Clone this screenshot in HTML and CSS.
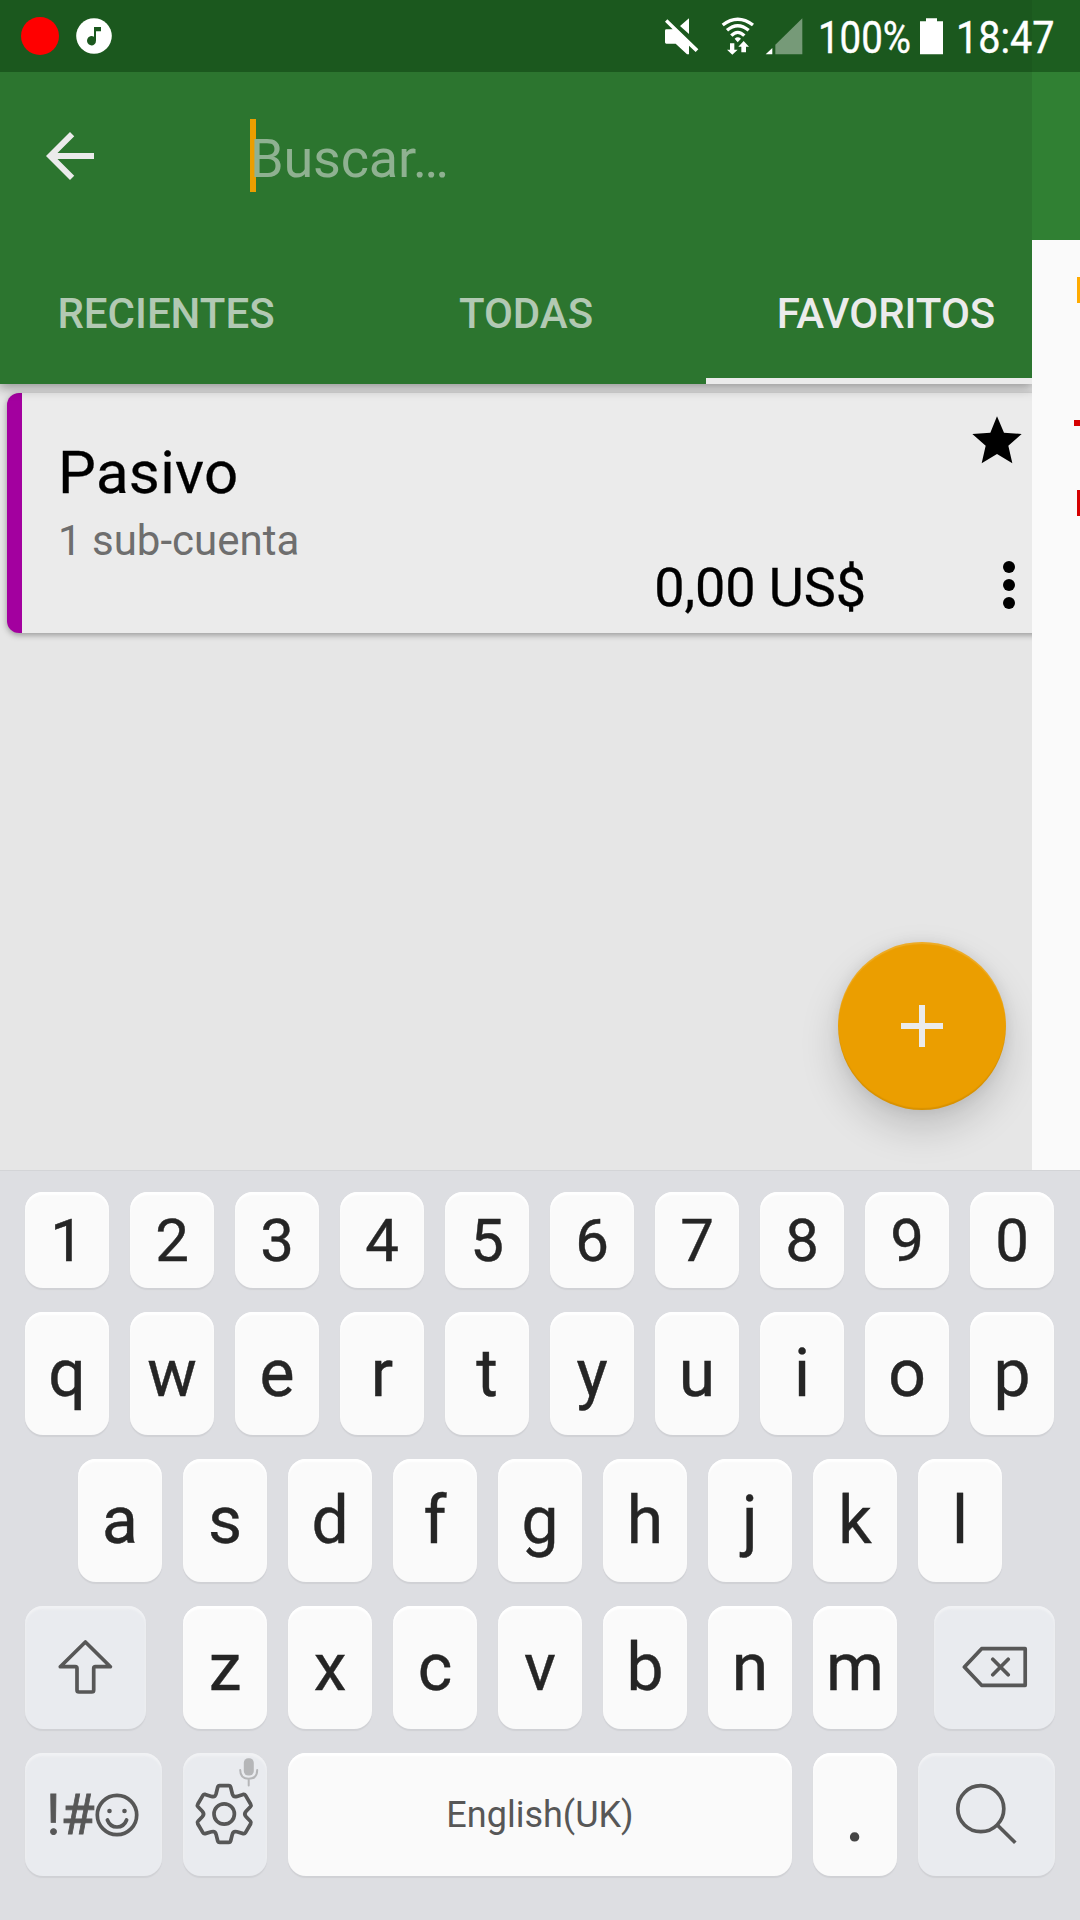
FILE: index.html
```html
<!DOCTYPE html>
<html lang="es">
<head>
<meta charset="utf-8">
<title>Cuentas</title>
<link rel="stylesheet" href="styles.css">
</head>
<body>
<div class="screen">
  <header class="status">
    <div class="status-left">
      <span class="record"></span>
      <svg class="music" width="36" height="36" viewBox="0 0 36 36"><circle cx="18" cy="18" r="17.8" fill="#fff"/><path class="note" d="M18 9h7v4.200h-5v9.300a4.500 4.700 0 1 1-2-3.700z"/></svg>
    </div>
    <div class="status-right">
      <svg class="mute" width="36" height="38" viewBox="72 50 108 114" fill="#fff"><path d="M147 54v47L120 77zM79 87h19L75 64l7-7 93 90-8 8-20-19v26h-6l-34-32H79q-4 0-4-4V91q0-4 4-4z"/></svg>
      <svg class="wifi" width="34" height="38" viewBox="242 50 102 114" fill="none" stroke="#fff" stroke-width="10"><path d="M247 74Q292 39 338 74M260 90Q292 62 325 90M273 106Q292 86 312 106"/><path stroke="none" fill="#fff" d="M283 115q9-8 19 0l-10 11zM269 129h13v19h10l-16 15-16-15h9zM303 156v-17h-9l16-17 16 17h-9v17z"/></svg>
      <svg class="signal" width="38" height="38" viewBox="374 50 114 114"><path fill="#769a78" d="M486 54v108h-81v-29z"/><path fill="#fff" d="M396 143v19h-20z"/></svg>
      <span class="status-text percent">100%</span>
      <svg class="battery" width="24" height="38" viewBox="840 50 72 114"><path fill="#fff" d="M858 54h33v9h18v99h-69V63h18z"/></svg>
      <span class="status-text clock">18:47</span>
    </div>
  </header>

  <main class="app">
    <section class="pane">
      <div class="toolbar">
        <div class="search-row">
          <svg class="back" width="72" height="72" viewBox="0 0 24 24" fill="#ebebeb"><path d="M20 11H7.830l5.590-5.590L12 4l-8 8 8 8 1.410-1.410L7.830 13H20v-2z"/></svg>
          <div class="search"><i class="caret"></i><span>Buscar…</span></div>
        </div>
        <nav class="tabs">
          <a class="tab">RECIENTES</a>
          <a class="tab">TODAS</a>
          <a class="tab active">FAVORITOS</a>
        </nav>
      </div>
      <article class="card">
        <div class="info">
          <h2>Pasivo</h2>
          <p>1 sub-cuenta</p>
        </div>
        <div class="amount">0,00 US$</div>
        <div class="actions">
          <svg class="star" width="50" height="48" viewBox="1116 498 150 144"><path d="M1191 499l21 49 53 4-40 35 12 53-46-28-46 28 12-53-40-35 54-4z"/></svg>
          <svg class="more" width="12" height="48" viewBox="0 0 12 48"><circle cx="6" cy="6" r="6"/><circle cx="6" cy="24" r="6"/><circle cx="6" cy="42" r="6"/></svg>
        </div>
      </article>
      <button class="fab"><svg width="42" height="42" viewBox="0 0 42 42"><path fill="#ebebeb" d="M18 0h6v18h18v6H24v18h-6V24H0v-6h18z"/></svg></button>
    </section>
    <aside class="peek">
      <div class="peek-bar"></div>
      <div class="peek-list">
        <span class="mark amber"></span>
        <span class="mark dash"></span>
        <span class="mark red"></span>
      </div>
    </aside>
  </main>

  <section class="keyboard">
    <div class="row full digits"><span class="key">1</span><span class="key">2</span><span class="key">3</span><span class="key">4</span><span class="key">5</span><span class="key">6</span><span class="key">7</span><span class="key">8</span><span class="key">9</span><span class="key">0</span></div>
    <div class="row full"><span class="key">q</span><span class="key">w</span><span class="key">e</span><span class="key">r</span><span class="key">t</span><span class="key">y</span><span class="key">u</span><span class="key">i</span><span class="key">o</span><span class="key">p</span></div>
    <div class="row"><span class="key">a</span><span class="key">s</span><span class="key">d</span><span class="key">f</span><span class="key">g</span><span class="key">h</span><span class="key">j</span><span class="key">k</span><span class="key">l</span></div>
    <div class="row">
      <span class="key fn shift"><svg width="121" height="123" viewBox="25 1606 121 123"><path d="M85.400 1642l25 24.700H95.500q-1.800 0-1.800 1.800V1690q0 2-2 2H79q-2 0-2-2v-21.500q0-1.800-1.800-1.800H60.300z"/></svg></span>
      <span class="key">z</span><span class="key">x</span><span class="key">c</span><span class="key">v</span><span class="key">b</span><span class="key">n</span><span class="key">m</span>
      <span class="key fn delete"><svg width="121" height="123" viewBox="934 1606 121 123"><path d="M964.400 1667l17.200-18.300h43.600v36.600h-43.600zM992.800 1659.300l15.400 15.400M1008.200 1659.300l-15.400 15.400"/></svg></span>
    </div>
    <div class="row">
      <span class="key fn symbols"><span>!#</span><svg width="44" height="44" viewBox="0 0 44 44"><circle cx="22" cy="22" r="19.700"/><path d="M12.400 27q2.600 7 9.600 7t9.600-7"/><g stroke="none" fill="#575757"><circle cx="14.500" cy="18" r="2.300"/><circle cx="29.500" cy="18" r="2.300"/></g></svg></span>
      <span class="key fn settings"><svg width="84" height="123" viewBox="183 1753 84 123"><path d="M219.700 1785.700h9q1.600 0 2 1.600l1.600 6.500q1 3.600 4.600 2.600l6.300-2q1.500-.4 2.300 1l5.200 8.900q.8 1.300-.3 2.500l-4.300 4.400q-2.600 2.800 0 5.600l4.300 4.400q1.100 1.200.3 2.500l-5.200 8.900q-.8 1.400-2.300 1l-6.300-1.800q-3.600-1-4.600 2.600l-1.600 6.300q-.4 1.600-2 1.600h-9q-1.600 0-2-1.600l-1.600-6.300q-1-3.600-4.600-2.600l-6.300 1.800q-1.500.4-2.300-1l-5.200-8.900q-.8-1.300.3-2.500l4.300-4.400q2.600-2.800 0-5.600l-4.300-4.400q-1.100-1.200-.3-2.500l5.200-8.900q.8-1.400 2.300-1l6.300 2q3.600 1 4.600-2.600l1.600-6.500q.4-1.600 2-1.600z"/><circle cx="224.200" cy="1814" r="10.200"/><g class="mic"><rect x="243.800" y="1758.300" width="10" height="17.200" rx="4.500"/><path d="M240.200 1770q0 8.800 8.500 8.800t8.500-8.800M248.700 1779v6.500"/></g></svg></span>
      <span class="key space">English(UK)</span>
      <span class="key period">.</span>
      <span class="key fn find"><svg width="137" height="123" viewBox="918 1753 137 123"><circle cx="980.800" cy="1808.700" r="23"/><path d="M997.300 1825l18 17.700"/></svg></span>
    </div>
  </section>
</div>
</body>
</html>
```
FILE: styles.css
```css
* { box-sizing: border-box; }

body {
  margin: 0;
  font-family: Roboto, "Liberation Sans", sans-serif;
}

.screen {
  width: 1080px;
  height: 1920px;
  display: flex;
  flex-direction: column;
  overflow: hidden;
}

svg { display: block; flex: none; }

/* Status bar */
.status {
  height: 72px;
  display: flex;
  justify-content: space-between;
  background: linear-gradient(90deg, #1b581e 1032px, #1d5e20 1032px);
  color: #fff;
}

.status-left,
.status-right { display: flex; align-items: center; }

.status-left { padding-left: 21px; gap: 17px; }

.record {
  width: 38px;
  height: 38px;
  border-radius: 50%;
  background: #f00;
}

.note { fill: #1b581e; }

.status-right { width: 416px; }
.mute { margin-top: -1px; }
.wifi { margin: -1px 0 0 21px; }
.signal { margin: -1px 0 0 10px; }
.battery { margin-top: -1px; }

.status-text {
  padding-top: 3px;
  font-size: 45px;
  white-space: nowrap;
  transform: scaleX(.88);
  transform-origin: left;
  -webkit-text-stroke: .4px #fff;
}

.percent { width: 102px; margin-left: 15px; transform: scaleX(.855); }
.clock { width: 110px; margin-left: 12px; }

/* Navigation pane with the strip of the page behind it */
.app { height: 1098px; display: flex; }

.pane {
  position: relative;
  width: 1032px;
  display: flex;
  flex-direction: column;
  overflow: hidden;
  background: #e6e6e6;
}

.toolbar {
  position: relative;
  z-index: 1;
  background: #2c752f;
  box-shadow: 0 3px 11px 1px rgba(0, 0, 0, .34);
}

.search-row {
  height: 168px;
  display: flex;
  align-items: center;
  padding-left: 34px;
}

.search {
  display: flex;
  align-items: center;
  height: 73px;
  margin: -2px 0 0 144px;
  color: #8fb191;
  font-size: 54px;
  letter-spacing: -.2px;
}

.search span { padding-top: 7px; }

.caret {
  width: 6px;
  height: 73px;
  margin-right: -6px;
  background: #eb9e00;
}

.tabs {
  display: flex;
  width: 1080px;
  margin-left: -14px;
}

.tab {
  width: 360px;
  height: 144px;
  padding-top: 9px;
  display: flex;
  align-items: center;
  justify-content: center;
  border-bottom: 6px solid transparent;
  color: #b2c9b3;
  font-size: 42px;
  font-weight: 500;
}

.tab.active { color: #ebebeb; border-color: #ebebeb; }

.card {
  height: 240px;
  margin: 9px -12px 0 7px;
  display: flex;
  border-left: 15px solid #a3009f;
  border-radius: 12px 0 0 12px;
  background: #ebebeb;
  box-shadow: 0 2px 6px rgba(0, 0, 0, .35);
}

.info { flex: 1; padding: 45px 0 0 36px; }

.info h2 {
  margin: 0;
  font-size: 60px;
  font-weight: 400;
  line-height: 70px;
  letter-spacing: .35px;
}

.info p {
  margin: 8px 0 0;
  color: #6e6e6e;
  font-size: 42px;
  line-height: 50px;
}

.amount {
  align-self: flex-end;
  padding-bottom: 13px;
  font-size: 54px;
  line-height: 64px;
  letter-spacing: -.1px;
}

.actions {
  width: 178px;
  padding: 23px 22px 24px 0;
  display: flex;
  flex-direction: column;
  align-items: flex-end;
  justify-content: space-between;
}

.more { margin-right: 7px; }

.info h2,
.amount { -webkit-text-stroke: .3px #000; }

.fab {
  position: absolute;
  left: 838px;
  top: 870px;
  width: 168px;
  height: 168px;
  padding: 0;
  display: flex;
  align-items: center;
  justify-content: center;
  border: 0;
  border-radius: 50%;
  background: #eb9e00;
  box-shadow: 0 18px 38px rgba(0, 0, 0, .17), 0 0 14px rgba(0, 0, 0, .08),
    inset 0 2px 1px rgba(255, 255, 255, .15), inset 0 -2px 1px rgba(0, 0, 0, .08);
}

.peek { width: 48px; background: #fafafa; }
.peek-bar { height: 168px; background: #308033; }

.peek-list {
  display: flex;
  flex-direction: column;
  align-items: flex-end;
  padding-top: 37px;
}

.mark { width: 3px; height: 26px; }
.amber { background: #ffab00; }
.dash { width: 6px; height: 6px; margin: 117px 0 64px; background: #d50000; }
.red { background: #d50000; }

/* Keyboard */
.keyboard {
  height: 750px;
  padding: 21px 25px 0;
  display: flex;
  flex-direction: column;
  gap: 24px;
  border-top: 1px solid #d3d4d7;
  background: #dddee2;
}

.row {
  height: 123px;
  display: flex;
  justify-content: center;
  gap: 21px;
}

.row.full { justify-content: flex-start; }
.row.digits { height: 96px; }

.key {
  width: 84px;
  display: flex;
  align-items: center;
  justify-content: center;
  border-radius: 18px;
  background: #fafafa;
  box-shadow: 0 2px 1px #d0d1d5, inset 0 3px 2px #fff;
  color: #252525;
  font-size: 66px;
  -webkit-text-stroke: .4px currentColor;
}

.digits .key { font-size: 60px; }

.fn {
  background: #e9ebef;
  box-shadow: 0 2px 1px #d0d1d5, inset 0 3px 2px #f1f2f4;
  color: #575757;
}

.fn svg {
  fill: none;
  stroke: #575757;
  stroke-width: 3.700;
  stroke-linejoin: round;
  stroke-linecap: round;
}

.shift { width: 121px; margin-right: 16px; }
.delete { width: 121px; margin-left: 16px; }
.symbols, .find { width: 137px; }
.symbols { padding-right: 2px; font-size: 55px; -webkit-text-stroke: .8px #575757; }
.symbols span { letter-spacing: .3px; }
.find svg { stroke-linecap: butt; }

.fn .mic { fill: none; stroke: #b5b6b8; stroke-width: 2; }
.mic rect { fill: #b5b6b8; stroke: none; }

.space {
  width: 504px;
  color: #575757;
  font-size: 36px;
  -webkit-text-stroke: 0;
}

.period { padding-top: 5px; color: #454545; -webkit-text-stroke: 2px #454545; }
```
